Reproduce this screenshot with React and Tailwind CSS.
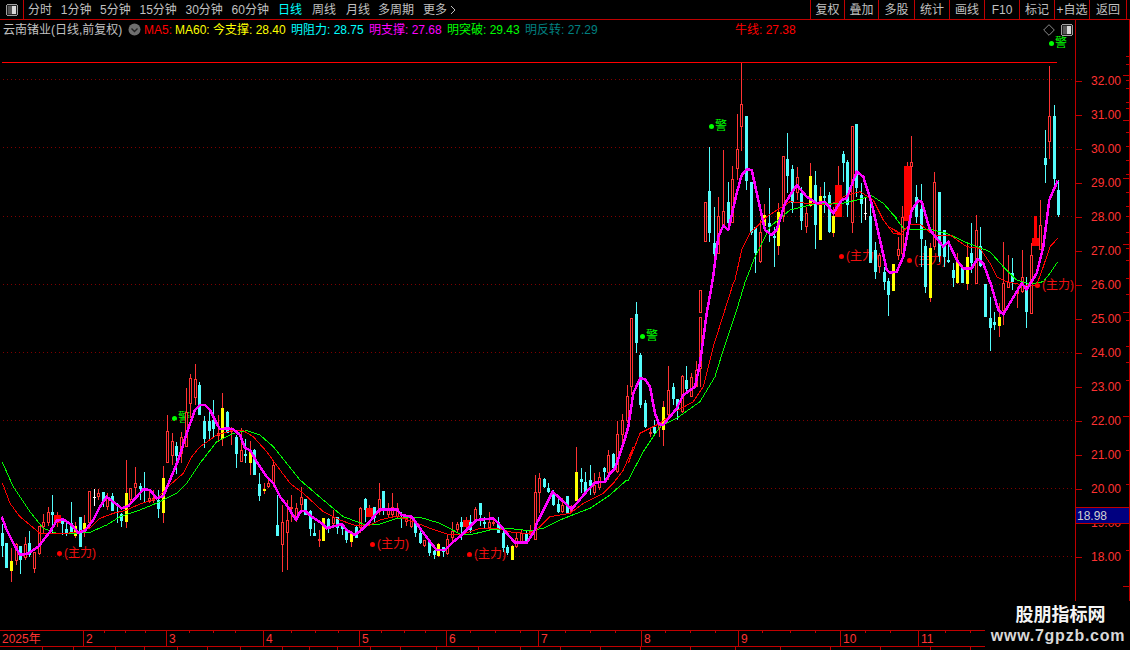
const CANDLE = { r: '#ff3232', R: '#ff0000', S: '#ff0000', c: '#54fcfc', y: '#ffff00', w: '#ffffff' }

// candle rows are read off 3x crops: [x, wick top, body top, body bottom, wick bottom, type]
const z = (ox, oy, rows) =>
  rows.map(([x, a, b, c, d, t]) => ({
    x: Math.round(ox + x / 3),
    wt: Math.round(oy + a / 3),
    bt: Math.round(oy + b / 3),
    bb: Math.round(oy + c / 3),
    wb: Math.round(oy + d / 3),
    t,
  }))

const pts = (ox, oy, arr) => arr.map(([x, y]) => `${(ox + x / 3).toFixed(1)},${(oy + y / 3).toFixed(1)}`).join(' ')

const candles = [
  ...z(0, 400, [
    [7, 372, 400, 437, 470, 'c'], [18, 430, 430, 505, 505, 'c'], [34, 445, 483, 513, 545, 'y'], [49, 430, 432, 483, 495, 'r'],
    [61, 438, 438, 480, 522, 'c'], [75, 410, 432, 475, 480, 'r'], [87, 393, 430, 465, 470, 'c'], [102, 455, 455, 508, 518, 'r'],
    [118, 378, 378, 462, 465, 'r'], [130, 343, 367, 380, 400, 'r'], [145, 321, 336, 370, 378, 'r'], [157, 285, 336, 345, 400, 'c'],
    [172, 336, 345, 370, 382, 'R'], [187, 355, 360, 372, 405, 'c'], [198, 370, 387, 398, 408, 'c'], [213, 306, 368, 395, 400, 'c'],
    [226, 365, 378, 408, 415, 'y'], [241, 351, 351, 440, 440, 'c'], [253, 345, 369, 390, 410, 'y'], [268, 274, 274, 370, 385, 'r'],
    [283, 266, 290, 291, 318, 'w'], [295, 266, 278, 290, 300, 'r'], [310, 277, 277, 305, 320, 'c'], [322, 280, 295, 320, 330, 'r'],
    [337, 280, 288, 332, 332, 'c'], [352, 310, 335, 340, 370, 'c'], [364, 340, 342, 362, 380, 'c'], [379, 180, 278, 365, 385, 'y'],
    [391, 265, 265, 300, 310, 'r'], [406, 200, 250, 265, 295, 'r'], [421, 250, 258, 268, 300, 'c'], [433, 216, 265, 270, 310, 'c'],
    [448, 270, 295, 305, 310, 'r'], [460, 270, 293, 303, 310, 'r'], [475, 270, 300, 328, 355, 'c'], [490, 198, 234, 338, 368, 'y'],
  ]),
  ...z(150, 355, [
    [52, 181, 229, 323, 323, 'r'], [67, 235, 259, 303, 330, 'r'], [79, 260, 273, 303, 357, 'c'], [94, 232, 247, 297, 325, 'r'],
    [109, 100, 170, 275, 275, 'r'], [121, 57, 70, 148, 190, 'r'], [136, 27, 72, 128, 150, 'r'], [148, 82, 90, 180, 180, 'c'],
    [163, 183, 198, 252, 278, 'c'], [178, 170, 198, 228, 252, 'c'], [190, 136, 195, 222, 250, 'c'], [205, 180, 233, 243, 260, 'r'],
    [217, 114, 159, 252, 273, 'y'], [232, 168, 170, 235, 235, 'c'], [243, 215, 224, 226, 270, 'r'], [259, 240, 245, 297, 338, 'c'],
    [274, 220, 286, 320, 322, 'r'], [286, 252, 298, 303, 325, 'c'], [301, 258, 288, 324, 360, 'y'], [313, 283, 284, 360, 360, 'c'],
  ]),
  ...z(0, 400, [
    [778, 220, 252, 288, 302, 'c'], [793, 250, 266, 273, 282, 'y'], [805, 235, 248, 262, 265, 'r'], [820, 180, 195, 250, 262, 'r'],
    [832, 285, 375, 408, 408, 'c'],
  ]),
  ...z(280, 400, [
    [7, 315, 365, 435, 515, 'r'], [22, 300, 360, 400, 510, 'r'], [33, 285, 320, 321, 365, 'r'], [48, 310, 325, 352, 365, 'r'],
    [62, 262, 290, 316, 340, 'r'], [76, 296, 298, 345, 345, 'c'], [91, 330, 332, 386, 408, 'c'], [103, 370, 400, 407, 408, 'c'],
    [118, 390, 417, 422, 440, 'r'], [130, 355, 355, 422, 422, 'y'], [145, 355, 358, 380, 400, 'c'], [160, 330, 352, 372, 385, 'r'],
    [172, 350, 352, 385, 402, 'c'], [186, 370, 375, 388, 405, 'c'], [199, 390, 392, 420, 430, 'c'], [214, 395, 402, 426, 440, 'y'],
    [229, 375, 380, 413, 413, 'c'], [241, 320, 325, 385, 400, 'r'], [256, 293, 298, 330, 365, 'c'], [268, 315, 325, 350, 352, 'R'],
    [283, 320, 322, 355, 370, 'c'], [298, 250, 298, 335, 345, 'r'], [310, 273, 273, 328, 345, 'c'], [325, 310, 325, 345, 350, 'r'],
    [337, 280, 320, 345, 350, 'r'], [352, 310, 325, 350, 355, 'r'], [364, 335, 350, 358, 385, 'c'], [379, 350, 355, 365, 378, 'r'],
    [394, 345, 355, 382, 385, 'r'], [406, 360, 370, 398, 412, 'c'], [421, 385, 398, 428, 432, 'c'], [433, 420, 420, 438, 442, 'r'],
    [448, 420, 425, 460, 467, 'c'], [463, 450, 452, 466, 477, 'c'], [475, 430, 432, 468, 470, 'y'], [490, 440, 442, 455, 470, 'c'],
    [502, 405, 418, 463, 465, 'r'], [517, 365, 392, 414, 425, 'r'], [532, 365, 372, 390, 400, 'r'], [544, 350, 365, 380, 420, 'c'],
    [559, 350, 360, 380, 395, 'R'], [571, 345, 365, 390, 400, 'c'], [586, 322, 328, 365, 368, 'r'], [601, 308, 308, 345, 378, 'c'],
    [613, 350, 365, 372, 385, 'c'], [628, 335, 365, 385, 390, 'r'], [640, 355, 365, 372, 378, 'r'], [655, 350, 365, 400, 400, 'c'],
    [670, 385, 398, 445, 455, 'c'], [682, 435, 440, 460, 465, 'c'], [697, 436, 438, 480, 480, 'y'], [709, 400, 415, 440, 443, 'r'],
    [724, 390, 398, 425, 425, 'r'], [739, 390, 400, 422, 425, 'c'], [751, 375, 392, 405, 408, 'r'], [766, 225, 277, 420, 420, 'r'],
    [778, 220, 235, 280, 340, 'r'], [793, 235, 238, 260, 265, 'c'], [805, 250, 263, 275, 280, 'c'], [820, 270, 275, 315, 318, 'c'],
    [835, 290, 312, 335, 340, 'c'],
  ]),
  ...z(530, 430, [
    [97, 205, 225, 245, 248, 'r'], [112, 198, 198, 250, 250, 'c'], [124, 225, 238, 245, 248, 'r'], [139, 52, 125, 213, 213, 'y'],
    [154, 115, 148, 155, 190, 'c'], [166, 125, 155, 185, 190, 'c'], [181, 105, 150, 168, 195, 'c'], [193, 130, 165, 190, 195, 'r'],
    [208, 125, 140, 175, 180, 'r'], [223, 110, 115, 125, 155, 'c'], [235, 60, 75, 130, 150, 'r'], [250, 70, 72, 115, 125, 'c'],
    [262, 0, 12, 125, 128, 'r'],
  ]),
  ...z(560, 280, [
    [172, 422, 462, 575, 578, 'r'], [187, 403, 420, 465, 490, 'r'], [202, 316, 348, 424, 430, 'r'], [214, 115, 115, 322, 345, 'r'],
    [229, 66, 102, 190, 220, 'c'], [241, 218, 225, 375, 383, 'c'], [256, 360, 368, 441, 445, 'c'], [271, 440, 455, 462, 472, 'r'],
    [283, 420, 440, 458, 465, 'c'], [298, 435, 435, 445, 470, 'r'], [310, 363, 381, 450, 497, 'y'], [325, 258, 330, 405, 408, 'r'],
    [340, 310, 320, 358, 375, 'c'], [352, 358, 358, 390, 420, 'c'], [367, 285, 288, 395, 398, 'r'], [379, 258, 300, 328, 340, 'c'],
    [394, 280, 292, 350, 352, 'r'], [407, 243, 270, 320, 322, 'r'], [421, 30, 30, 100, 100, 'r'], [421, 112, 112, 268, 320, 'r'],
  ]),
  ...z(690, 60, [
    [46, 427, 427, 545, 545, 'r'], [58, 262, 393, 518, 545, 'c'], [73, 440, 548, 582, 600, 'c'], [85, 410, 467, 582, 582, 'r'],
    [100, 270, 453, 498, 500, 'r'], [115, 365, 427, 490, 490, 'c'], [127, 318, 358, 488, 490, 'r'], [142, 163, 267, 328, 360, 'r'],
    [154, 8, 133, 202, 272, 'r'], [169, 168, 168, 362, 390, 'c'], [184, 365, 365, 520, 525, 'c'], [196, 500, 500, 580, 640, 'c'],
    [211, 480, 515, 605, 610, 'r'], [223, 432, 465, 498, 505, 'y'], [238, 385, 488, 500, 545, 'c'], [253, 500, 528, 533, 620, 'c'],
    [265, 430, 456, 558, 585, 'y'], [280, 288, 288, 470, 485, 'r'], [292, 220, 297, 348, 400, 'c'], [307, 315, 327, 430, 460, 'c'],
    [322, 320, 352, 400, 420, 'r'], [334, 380, 400, 482, 510, 'c'], [349, 440, 458, 500, 518, 'r'], [361, 310, 348, 438, 440, 'y'],
    [376, 333, 375, 495, 567, 'c'], [391, 380, 408, 540, 540, 'y'], [403, 365, 408, 415, 460, 'c'], [418, 395, 405, 517, 520, 'c'],
    [430, 440, 468, 518, 530, 'y'], [445, 318, 375, 470, 470, 'R'], [460, 272, 282, 310, 365, 'c'], [472, 300, 305, 435, 470, 'c'],
    [487, 198, 198, 490, 518, 'r'], [499, 192, 192, 385, 410, 'c'], [514, 368, 405, 432, 490, 'c'], [526, 415, 460, 462, 480, 'w'],
    [541, 405, 468, 610, 610, 'c'],
  ]),
  ...z(690, 230, [
    [556, 37, 60, 125, 148, 'c'], [568, 70, 75, 110, 130, 'r'], [583, 110, 125, 155, 180, 'c'], [595, 145, 153, 195, 258, 'c'],
    [610, 102, 102, 183, 183, 'y'],
  ]),
  ...z(890, 60, [
    [25, 530, 567, 587, 600, 'r'], [37, 438, 470, 582, 582, 'r'], [52, 306, 318, 482, 482, 'R'], [64, 228, 306, 320, 470, 'r'],
    [79, 375, 410, 472, 490, 'c'], [94, 372, 447, 537, 620, 'c'], [106, 540, 558, 680, 700, 'c'], [121, 550, 565, 715, 725, 'y'],
    [133, 337, 367, 560, 570, 'r'], [148, 395, 395, 587, 605, 'c'], [163, 510, 510, 590, 620, 'c'], [175, 550, 600, 605, 610, 'c'],
    [190, 610, 630, 655, 680, 'c'], [202, 578, 600, 668, 672, 'y'], [217, 620, 620, 668, 670, 'c'], [232, 550, 590, 672, 690, 'y'],
    [244, 490, 578, 610, 640, 'c'], [259, 465, 510, 672, 672, 'r'], [271, 500, 558, 618, 620, 'c'], [286, 672, 672, 772, 772, 'c'],
    [301, 710, 775, 803, 872, 'c'], [313, 755, 785, 795, 810, 'c'], [328, 730, 770, 797, 830, 'y'], [340, 545, 670, 752, 795, 'r'],
    [355, 585, 665, 683, 685, 'r'], [367, 595, 640, 665, 690, 'c'], [382, 680, 690, 703, 745, 'r'], [397, 570, 650, 697, 700, 'r'],
    [409, 650, 685, 755, 803, 'c'], [424, 550, 585, 762, 762, 'r'], [436, 468, 468, 558, 558, 'S'], [436, 535, 535, 558, 558, 'R'],
    [451, 420, 495, 570, 570, 'r'], [466, 210, 293, 315, 370, 'c'], [478, 18, 168, 245, 298, 'r'], [493, 135, 168, 357, 375, 'c'],
    [505, 360, 390, 465, 470, 'c'],
  ]),
]

const magenta = [
  pts(0, 400, [[5, 350], [20, 390], [40, 430], [60, 465], [85, 460], [115, 440], [150, 395], [170, 362], [190, 358], [215, 375], [235, 398], [255, 392], [280, 360], [300, 320], [320, 290], [345, 310], [365, 325], [385, 318], [410, 290], [430, 268], [450, 270], [470, 295], [490, 288], [510, 240], [535, 180], [560, 100], [585, 30], [600, 15], [615, 15], [630, 30], [650, 70], [660, 88], [680, 85], [700, 88], [720, 105], [735, 145], [750, 150], [770, 185], [800, 230], [820, 250], [840, 290]]),
  pts(280, 400, [[20, 315], [48, 360], [60, 335], [75, 332], [95, 350], [125, 370], [140, 385], [165, 378], [185, 372], [200, 390], [225, 405], [250, 385], [265, 370], [285, 345], [300, 328], [350, 328], [365, 345], [395, 350], [420, 385], [450, 425], [470, 450], [495, 450], [520, 425], [545, 405], [570, 380], [590, 360], [640, 355], [660, 375], [680, 400], [705, 428], [740, 428], [765, 390]]),
  pts(530, 430, [[20, 280], [68, 185], [125, 238], [165, 190], [195, 158], [225, 155], [240, 130], [255, 115], [270, 70], [285, 25]]),
  pts(560, 280, [[205, 440], [220, 340], [240, 295], [255, 297], [270, 320], [285, 400], [297, 432], [310, 435], [350, 385], [370, 345], [405, 320], [420, 250], [440, 100]]),
  pts(690, 60, [[68, 660], [85, 530], [100, 497], [115, 510], [140, 400], [155, 345], [170, 328], [185, 330], [205, 420], [225, 510], [245, 525], [260, 510], [285, 430], [320, 375], [350, 410], [380, 430], [405, 425], [430, 460], [455, 420], [470, 415], [500, 335], [520, 350], [545, 430], [570, 540], [590, 630]]),
  pts(890, 60, [[0, 638], [20, 635], [40, 590], [65, 450], [85, 422], [95, 425], [120, 510], [160, 560], [175, 545], [200, 600], [220, 625], [245, 625], [262, 597], [280, 610], [305, 680], [325, 750], [340, 763], [365, 720], [395, 670], [410, 688], [440, 640], [460, 560], [478, 420], [503, 362]]),
].join(' ')

const maRed = [
  pts(0, 400, [[7, 248], [30, 310], [60, 350], [90, 375], [120, 400], [170, 402], [220, 398], [270, 385], [300, 355], [340, 340], [380, 330], [420, 312], [470, 295], [510, 255], [550, 220], [575, 170], [600, 140], [650, 105], [700, 90], [730, 92], [760, 110], [800, 155]]),
  pts(280, 400, [[0, 210], [30, 250], [70, 280], [130, 335], [180, 360], [230, 378], [270, 375], [300, 360], [350, 348], [400, 365], [450, 385], [500, 402], [540, 405], [600, 385], [650, 385], [700, 398], [750, 400], [780, 380], [810, 350]]),
  pts(530, 430, [[120, 250], [160, 220], [220, 190], [250, 160], [280, 120], [310, 50]]),
  pts(560, 280, [[205, 550], [240, 460], [300, 430], [345, 395], [400, 365], [430, 320], [460, 200], [520, 10]]),
  pts(690, 60, [[135, 660], [155, 570], [180, 520], [230, 470], [300, 425], [350, 430], [420, 435], [470, 405], [510, 395], [550, 420], [580, 480], [610, 520], [640, 525]]),
  pts(890, 60, [[0, 502], [30, 522], [60, 495], [90, 492], [130, 525], [180, 525], [230, 560], [270, 565], [300, 610], [320, 650], [350, 665], [400, 675], [440, 675], [460, 620], [480, 560], [503, 535]]),
].join(' ')

const maGreen = [
  pts(0, 400, [[7, 187], [40, 260], [90, 335], [130, 385], [170, 400], [220, 400], [270, 397], [320, 375], [360, 350], [420, 330], [480, 305], [530, 280], [560, 250], [600, 190], [650, 125], [700, 100], [740, 92], [780, 105], [820, 140]]),
  pts(280, 400, [[0, 165], [60, 240], [130, 300], [190, 350], [250, 372], [300, 372], [350, 355], [420, 352], [480, 370], [540, 402], [580, 402], [630, 390], [680, 385], [750, 392], [790, 385], [840, 360]]),
  pts(530, 430, [[120, 258], [180, 235], [240, 195], [290, 150]]),
  pts(560, 280, [[205, 600], [250, 515], [300, 440], [350, 415], [420, 365], [465, 290], [490, 210], [530, 90], [557, 0]]),
  pts(690, 60, [[168, 660], [195, 590], [240, 500], [300, 450], [380, 430], [450, 432], [500, 420], [545, 407], [580, 430], [620, 475]]),
  pts(890, 60, [[0, 452], [40, 505], [70, 510], [120, 508], [170, 520], [230, 548], [300, 575], [340, 620], [380, 660], [420, 672], [460, 665], [480, 640], [503, 605]]),
].join(' ')

const gridY = [79, 147, 216, 284, 352, 420, 488, 556]
const prices = ['32.00', '31.00', '30.00', '29.00', '28.00', '27.00', '26.00', '25.00', '24.00', '23.00', '22.00', '21.00', '20.00', '19.00', '18.00']
const navLeft = ['分时', '1分钟', '5分钟', '15分钟', '30分钟', '60分钟']
const navTools = [
  { label: '复权', w: 'w-[34px]' },
  { label: '叠加', w: 'w-[34px]' },
  { label: '多股', w: 'w-[36px]' },
  { label: '统计', w: 'w-[35px]' },
  { label: '画线', w: 'w-[35px]' },
  { label: 'F10', w: 'w-[35px]' },
  { label: '标记', w: 'w-[35px]' },
  { label: '+自选', w: 'w-[35px]' },
  { label: '返回', w: 'w-[37px]' },
]
const months = [
  { label: '2025年', w: 'w-[84px]' },
  { label: '2', w: 'w-[83px]' },
  { label: '3', w: 'w-[97px]' },
  { label: '4', w: 'w-[96px]' },
  { label: '5', w: 'w-[87px]' },
  { label: '6', w: 'w-[92px]' },
  { label: '7', w: 'w-[103px]' },
  { label: '8', w: 'w-[97px]' },
  { label: '9', w: 'w-[102px]' },
  { label: '10', w: 'w-[78px]' },
]

function PanelIcon() {
  return (
    <svg width="12" height="12" viewBox="0 0 12 12" shapeRendering="crispEdges">
      <rect x="0.5" y="0.5" width="11" height="11" rx="2" fill="#222" stroke="#a0a0a0" />
      <rect x="2" y="2" width="4" height="8" fill="#555" />
      <rect x="6" y="2" width="4" height="8" fill="#d8d8d8" />
    </svg>
  )
}

function Chart() {
  return (
    <svg width="1075" height="591" viewBox="0 39 1075 591" className="relative z-10 block">
      {gridY.map((y) => (
        <line key={y} x1="3" x2="1075" y1={y + 0.5} y2={y + 0.5} stroke="#800000" strokeDasharray="1 3" />
      ))}
      <g shapeRendering="crispEdges">
        <rect x="2" y="62" width="1055" height="1" fill="#ff0000" />
        {candles.map((c, i) => {
          const color = CANDLE[c.t]
          const wick = c.t === 'c' || c.t === 'w' ? color : '#ff3232'
          const wide = c.t === 'R'
          const w = wide ? 7 : 3
          const left = c.x - (wide ? 3 : 1)
          return (
            <g key={i}>
              <rect x={c.x} y={c.wt} width="1" height={Math.max(c.wb - c.wt, 1)} fill={wick} />
              {c.t === 'r' ? (
                <rect x={left + 0.5} y={c.bt + 0.5} width={w - 1} height={Math.max(c.bb - c.bt - 1, 1)} fill="#000" stroke={color} />
              ) : (
                <rect x={left} y={c.bt} width={w} height={Math.max(c.bb - c.bt, 1)} fill={color} />
              )}
            </g>
          )
        })}
        <polyline points={maGreen} fill="none" stroke="#00ff00" strokeWidth="1" />
        <polyline points={maRed} fill="none" stroke="#ff0000" strokeWidth="1" />
        <polyline points={magenta} fill="none" stroke="#ff00ff" strokeWidth="2.5" strokeLinejoin="round" />
      </g>
    </svg>
  )
}

function Zhuli({ className }) {
  return (
    <div className={`absolute flex h-[14px] items-center gap-[2px] text-[12px] text-[#f01010] ${className}`}>
      <span className="h-[5px] w-[5px] rounded-full bg-[#ff0000]" />
      <span>(主力)</span>
    </div>
  )
}

function Jing({ className }) {
  return (
    <div className={`absolute flex h-[14px] items-center gap-[1px] text-[12px] text-[#00ff00] ${className}`}>
      <span className="h-[5px] w-[5px] rounded-full bg-[#00ff00]" />
      <span>警</span>
    </div>
  )
}

export default function App() {
  return (
    <div className="relative flex h-[650px] w-[1130px] flex-col overflow-hidden bg-black font-['Liberation_Sans','Noto_Sans_CJK_SC',sans-serif] text-[12px] text-[#c0c0c0]">
      <div className="flex h-[20px] shrink-0 items-center border-b border-[#c00000]">
        <div className="flex h-full w-[24px] items-center justify-center border-r border-[#c00000]">
          <PanelIcon />
        </div>
        <div className="ml-[4px] flex items-center gap-[8.7px]">
          {navLeft.map((t) => (
            <span key={t}>{t}</span>
          ))}
        </div>
        <span className="ml-[9px] text-[#00ffff]">日线</span>
        <span className="ml-[10px]">周线</span>
        <span className="ml-[10px]">月线</span>
        <span className="ml-[8px]">多周期</span>
        <span className="ml-[9px]">更多</span>
        <svg width="8" height="12" viewBox="0 0 8 12" className="ml-[2px]">
          <path d="M2 2l4 4-4 4" fill="none" stroke="#c0c0c0" />
        </svg>
        <div className="ml-auto mr-[3px] flex h-full border-r border-[#c00000]">
          {navTools.map((t) => (
            <div key={t.label} className={`flex h-full items-center justify-center border-l border-[#c00000] ${t.w}`}>
              {t.label}
            </div>
          ))}
        </div>
      </div>

      <div className="flex h-[610px] shrink-0">
        <div className="w-[1075px] shrink-0">
          <div className="flex h-[19px] items-center whitespace-nowrap">
            <span className="ml-[3px] w-[125px] shrink-0">云南锗业(日线,前复权)</span>
            <svg width="13" height="13" viewBox="0 0 13 13" className="shrink-0">
              <circle cx="6.5" cy="6.5" r="6" fill="#6e6e6e" />
              <path d="M3.5 5.5l3 3 3-3" fill="none" stroke="#222" strokeWidth="1.4" />
            </svg>
            <span className="ml-[3px] w-[31px] shrink-0 text-[#ff0000]">MA5:</span>
            <span className="w-[38px] shrink-0 text-[#ffff00]">MA60:</span>
            <span className="w-[78px] shrink-0 text-[#ffff00]">今支撑: 28.40</span>
            <span className="w-[78px] shrink-0 text-[#00ffff]">明阻力: 28.75</span>
            <span className="w-[78px] shrink-0 text-[#ff00ff]">明支撑: 27.68</span>
            <span className="w-[78px] shrink-0 text-[#00ff00]">明突破: 29.43</span>
            <span className="w-[210px] shrink-0 text-[#008080]">明反转: 27.29</span>
            <span className="w-[308px] shrink-0 text-[#ff0000]">牛线: 27.38</span>
            <svg width="12" height="12" viewBox="0 0 12 12" className="shrink-0">
              <path d="M6 .7L11.3 6 6 11.3.7 6z" fill="none" stroke="#8a8a8a" />
            </svg>
            <div className="ml-[6px] flex shrink-0">
              <PanelIcon />
            </div>
          </div>
          <div className="relative h-[591px]">
            <Chart />
            <Zhuli className="left-[57px] top-[507px]" />
            <Zhuli className="left-[370px] top-[498px]" />
            <Zhuli className="left-[467px] top-[508px]" />
            <Zhuli className="left-[839px] top-[210px]" />
            <Zhuli className="left-[907px] top-[214px]" />
            <Zhuli className="left-[1035px] top-[239px] z-20" />
            <Jing className="left-[172px] top-[372px]" />
            <Jing className="left-[640px] top-[290px]" />
            <Jing className="left-[709px] top-[80px]" />
            <Jing className="left-[1049px] top-[-3px]" />
          </div>
        </div>

        <div className="relative flex-1 border-l border-r border-[#c00000] pt-[44px] text-[#ff3232]">
          {prices.map((p) => (
            <div key={p} className="flex h-[34px] items-center">
              <span className="h-px w-[6px] bg-[#c00000]" />
              <span className="ml-[9px]">{p}</span>
            </div>
          ))}
          <svg width="6" height="610" className="absolute right-0 top-0" shapeRendering="crispEdges">
            {[36, 44, 55, 60, 68, 82, 88, 100, 112, 126, 140, 154, 158, 172, 186, 196, 212, 224, 228, 240, 258, 274, 292, 300, 326, 342, 360, 396, 430, 464, 498, 530, 566, 590].map((y, i) => (
              <rect key={y} x={i % 5 === 2 ? 0 : 3} y={y} width={i % 5 === 2 ? 6 : 3} height="1" fill="#c00000" />
            ))}
          </svg>
          <div className="absolute left-0 top-[487px] flex h-[17px] w-full items-center border-y border-[#c00000] bg-[#000080] pl-[1px] text-[#d0d0d0]">
            18.98
          </div>
        </div>
      </div>

      <div className="relative flex h-[17px] shrink-0 border-y border-[#c00000] text-[#ff3232]">
        {months.map((m) => (
          <div key={m.label} className={`flex items-center border-r border-[#c00000] pl-[2px] ${m.w}`}>
            {m.label}
          </div>
        ))}
        <div className="flex flex-1 items-center pl-[2px]">11</div>
        <svg width="1130" height="3" className="absolute left-0 top-0" shapeRendering="crispEdges">
          {[104, 125, 145, 189, 213, 235, 291, 315, 338, 381, 404, 425, 470, 495, 520, 565, 590, 615, 665, 690, 715, 762, 790, 815, 865, 890, 945, 970, 1010, 1060].map((x) => (
            <rect key={x} x={x} y="0" width="1" height="2" fill="#c00000" />
          ))}
        </svg>
      </div>
      <svg width="1130" height="3" className="block shrink-0" shapeRendering="crispEdges">
        {[42, 73, 115, 144, 177, 207, 240, 282, 309, 337, 370, 400, 436, 478, 520, 560, 600, 640, 690, 735, 780, 830, 880, 930, 970].map((x) => (
          <rect key={x} x={x} y="0" width="1" height="3" fill="#c00000" />
        ))}
      </svg>

      <div className="absolute bottom-0 right-0 flex h-[49px] w-[145px] flex-col items-center bg-black pl-[6px]">
        <span className="mt-[3px] text-[18px] font-bold leading-[22px] text-[#f4f4f4]">股朋指标网</span>
        <span className="-ml-[5px] mt-[1px] text-[16px] font-bold leading-[18px] tracking-[0.75px] text-[#d8d8d8]">www.7gpzb.com</span>
      </div>
    </div>
  )
}
